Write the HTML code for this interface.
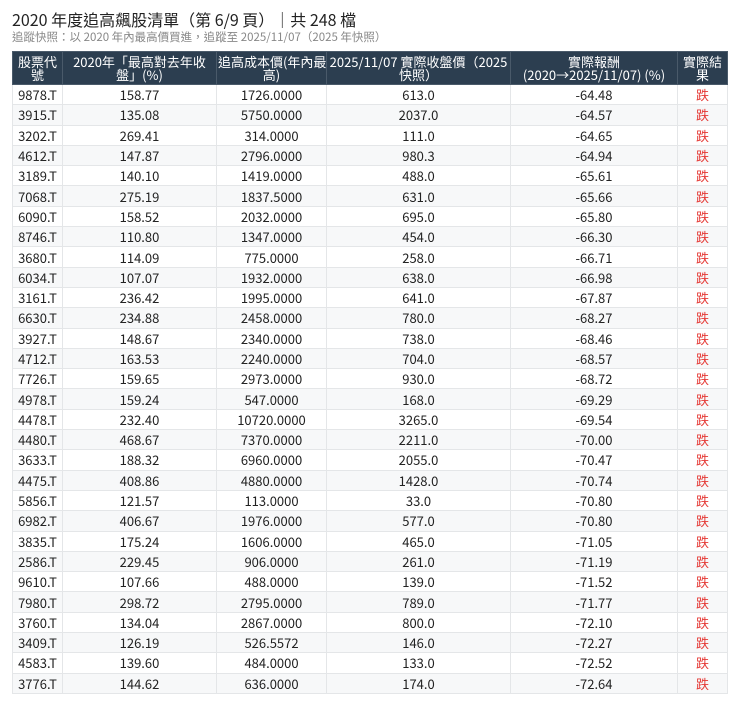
<!DOCTYPE html>
<html><head><meta charset="utf-8"><style>
body{margin:0;background:#fff;font-family:"Liberation Sans","Noto Sans CJK TC",sans-serif;color:#222;width:740px;height:706px;overflow:hidden}
h1{position:absolute;left:12px;top:7px;margin:0;font-size:16px;font-weight:normal;color:#222;font-family:"Noto Sans CJK TC",sans-serif}
.sub{position:absolute;left:12px;top:29px;font-size:11.5px;color:#888;font-family:"Noto Sans CJK TC",sans-serif}
table{position:absolute;left:12px;top:51px;border-collapse:collapse;width:715px;table-layout:fixed;font-family:"Noto Sans CJK TC",sans-serif;font-size:13px}
th{background:#2c3e50;color:#fff;font-weight:normal;height:32px;line-height:13px;padding:0 1px;border:1px solid #4a5a6a;font-size:13px;white-space:nowrap;overflow:hidden}
td{height:19.3px;text-align:center;border:1px solid #e4e6e8;padding:0;line-height:19px}
tr:nth-child(even) td{background:#f7f8f9}
td.r{color:#e53935}
</style></head><body>
<h1>2020 年度追高飆股清單（第 6/9 頁）｜共 248 檔</h1>
<div class="sub">追蹤快照：以 2020 年內最高價買進，追蹤至 2025/11/07（2025 年快照）</div>
<table>
<colgroup><col style="width:50px"><col style="width:154px"><col style="width:110px"><col style="width:184px"><col style="width:167px"><col style="width:50px"></colgroup>
<thead><tr><th>股票代<br>號</th><th>2020年「最高對去年收<br>盤」(%)</th><th>追高成本價(年內最<br>高)</th><th>2025/11/07 實際收盤價（2025<br>快照）</th><th>實際報酬<br>(2020→2025/11/07) (%)</th><th>實際結<br>果</th></tr></thead>
<tbody>
<tr><td>9878.T</td><td>158.77</td><td>1726.0000</td><td>613.0</td><td>-64.48</td><td class="r">跌</td></tr>
<tr><td>3915.T</td><td>135.08</td><td>5750.0000</td><td>2037.0</td><td>-64.57</td><td class="r">跌</td></tr>
<tr><td>3202.T</td><td>269.41</td><td>314.0000</td><td>111.0</td><td>-64.65</td><td class="r">跌</td></tr>
<tr><td>4612.T</td><td>147.87</td><td>2796.0000</td><td>980.3</td><td>-64.94</td><td class="r">跌</td></tr>
<tr><td>3189.T</td><td>140.10</td><td>1419.0000</td><td>488.0</td><td>-65.61</td><td class="r">跌</td></tr>
<tr><td>7068.T</td><td>275.19</td><td>1837.5000</td><td>631.0</td><td>-65.66</td><td class="r">跌</td></tr>
<tr><td>6090.T</td><td>158.52</td><td>2032.0000</td><td>695.0</td><td>-65.80</td><td class="r">跌</td></tr>
<tr><td>8746.T</td><td>110.80</td><td>1347.0000</td><td>454.0</td><td>-66.30</td><td class="r">跌</td></tr>
<tr><td>3680.T</td><td>114.09</td><td>775.0000</td><td>258.0</td><td>-66.71</td><td class="r">跌</td></tr>
<tr><td>6034.T</td><td>107.07</td><td>1932.0000</td><td>638.0</td><td>-66.98</td><td class="r">跌</td></tr>
<tr><td>3161.T</td><td>236.42</td><td>1995.0000</td><td>641.0</td><td>-67.87</td><td class="r">跌</td></tr>
<tr><td>6630.T</td><td>234.88</td><td>2458.0000</td><td>780.0</td><td>-68.27</td><td class="r">跌</td></tr>
<tr><td>3927.T</td><td>148.67</td><td>2340.0000</td><td>738.0</td><td>-68.46</td><td class="r">跌</td></tr>
<tr><td>4712.T</td><td>163.53</td><td>2240.0000</td><td>704.0</td><td>-68.57</td><td class="r">跌</td></tr>
<tr><td>7726.T</td><td>159.65</td><td>2973.0000</td><td>930.0</td><td>-68.72</td><td class="r">跌</td></tr>
<tr><td>4978.T</td><td>159.24</td><td>547.0000</td><td>168.0</td><td>-69.29</td><td class="r">跌</td></tr>
<tr><td>4478.T</td><td>232.40</td><td>10720.0000</td><td>3265.0</td><td>-69.54</td><td class="r">跌</td></tr>
<tr><td>4480.T</td><td>468.67</td><td>7370.0000</td><td>2211.0</td><td>-70.00</td><td class="r">跌</td></tr>
<tr><td>3633.T</td><td>188.32</td><td>6960.0000</td><td>2055.0</td><td>-70.47</td><td class="r">跌</td></tr>
<tr><td>4475.T</td><td>408.86</td><td>4880.0000</td><td>1428.0</td><td>-70.74</td><td class="r">跌</td></tr>
<tr><td>5856.T</td><td>121.57</td><td>113.0000</td><td>33.0</td><td>-70.80</td><td class="r">跌</td></tr>
<tr><td>6982.T</td><td>406.67</td><td>1976.0000</td><td>577.0</td><td>-70.80</td><td class="r">跌</td></tr>
<tr><td>3835.T</td><td>175.24</td><td>1606.0000</td><td>465.0</td><td>-71.05</td><td class="r">跌</td></tr>
<tr><td>2586.T</td><td>229.45</td><td>906.0000</td><td>261.0</td><td>-71.19</td><td class="r">跌</td></tr>
<tr><td>9610.T</td><td>107.66</td><td>488.0000</td><td>139.0</td><td>-71.52</td><td class="r">跌</td></tr>
<tr><td>7980.T</td><td>298.72</td><td>2795.0000</td><td>789.0</td><td>-71.77</td><td class="r">跌</td></tr>
<tr><td>3760.T</td><td>134.04</td><td>2867.0000</td><td>800.0</td><td>-72.10</td><td class="r">跌</td></tr>
<tr><td>3409.T</td><td>126.19</td><td>526.5572</td><td>146.0</td><td>-72.27</td><td class="r">跌</td></tr>
<tr><td>4583.T</td><td>139.60</td><td>484.0000</td><td>133.0</td><td>-72.52</td><td class="r">跌</td></tr>
<tr><td>3776.T</td><td>144.62</td><td>636.0000</td><td>174.0</td><td>-72.64</td><td class="r">跌</td></tr>
</tbody></table>
</body></html>
